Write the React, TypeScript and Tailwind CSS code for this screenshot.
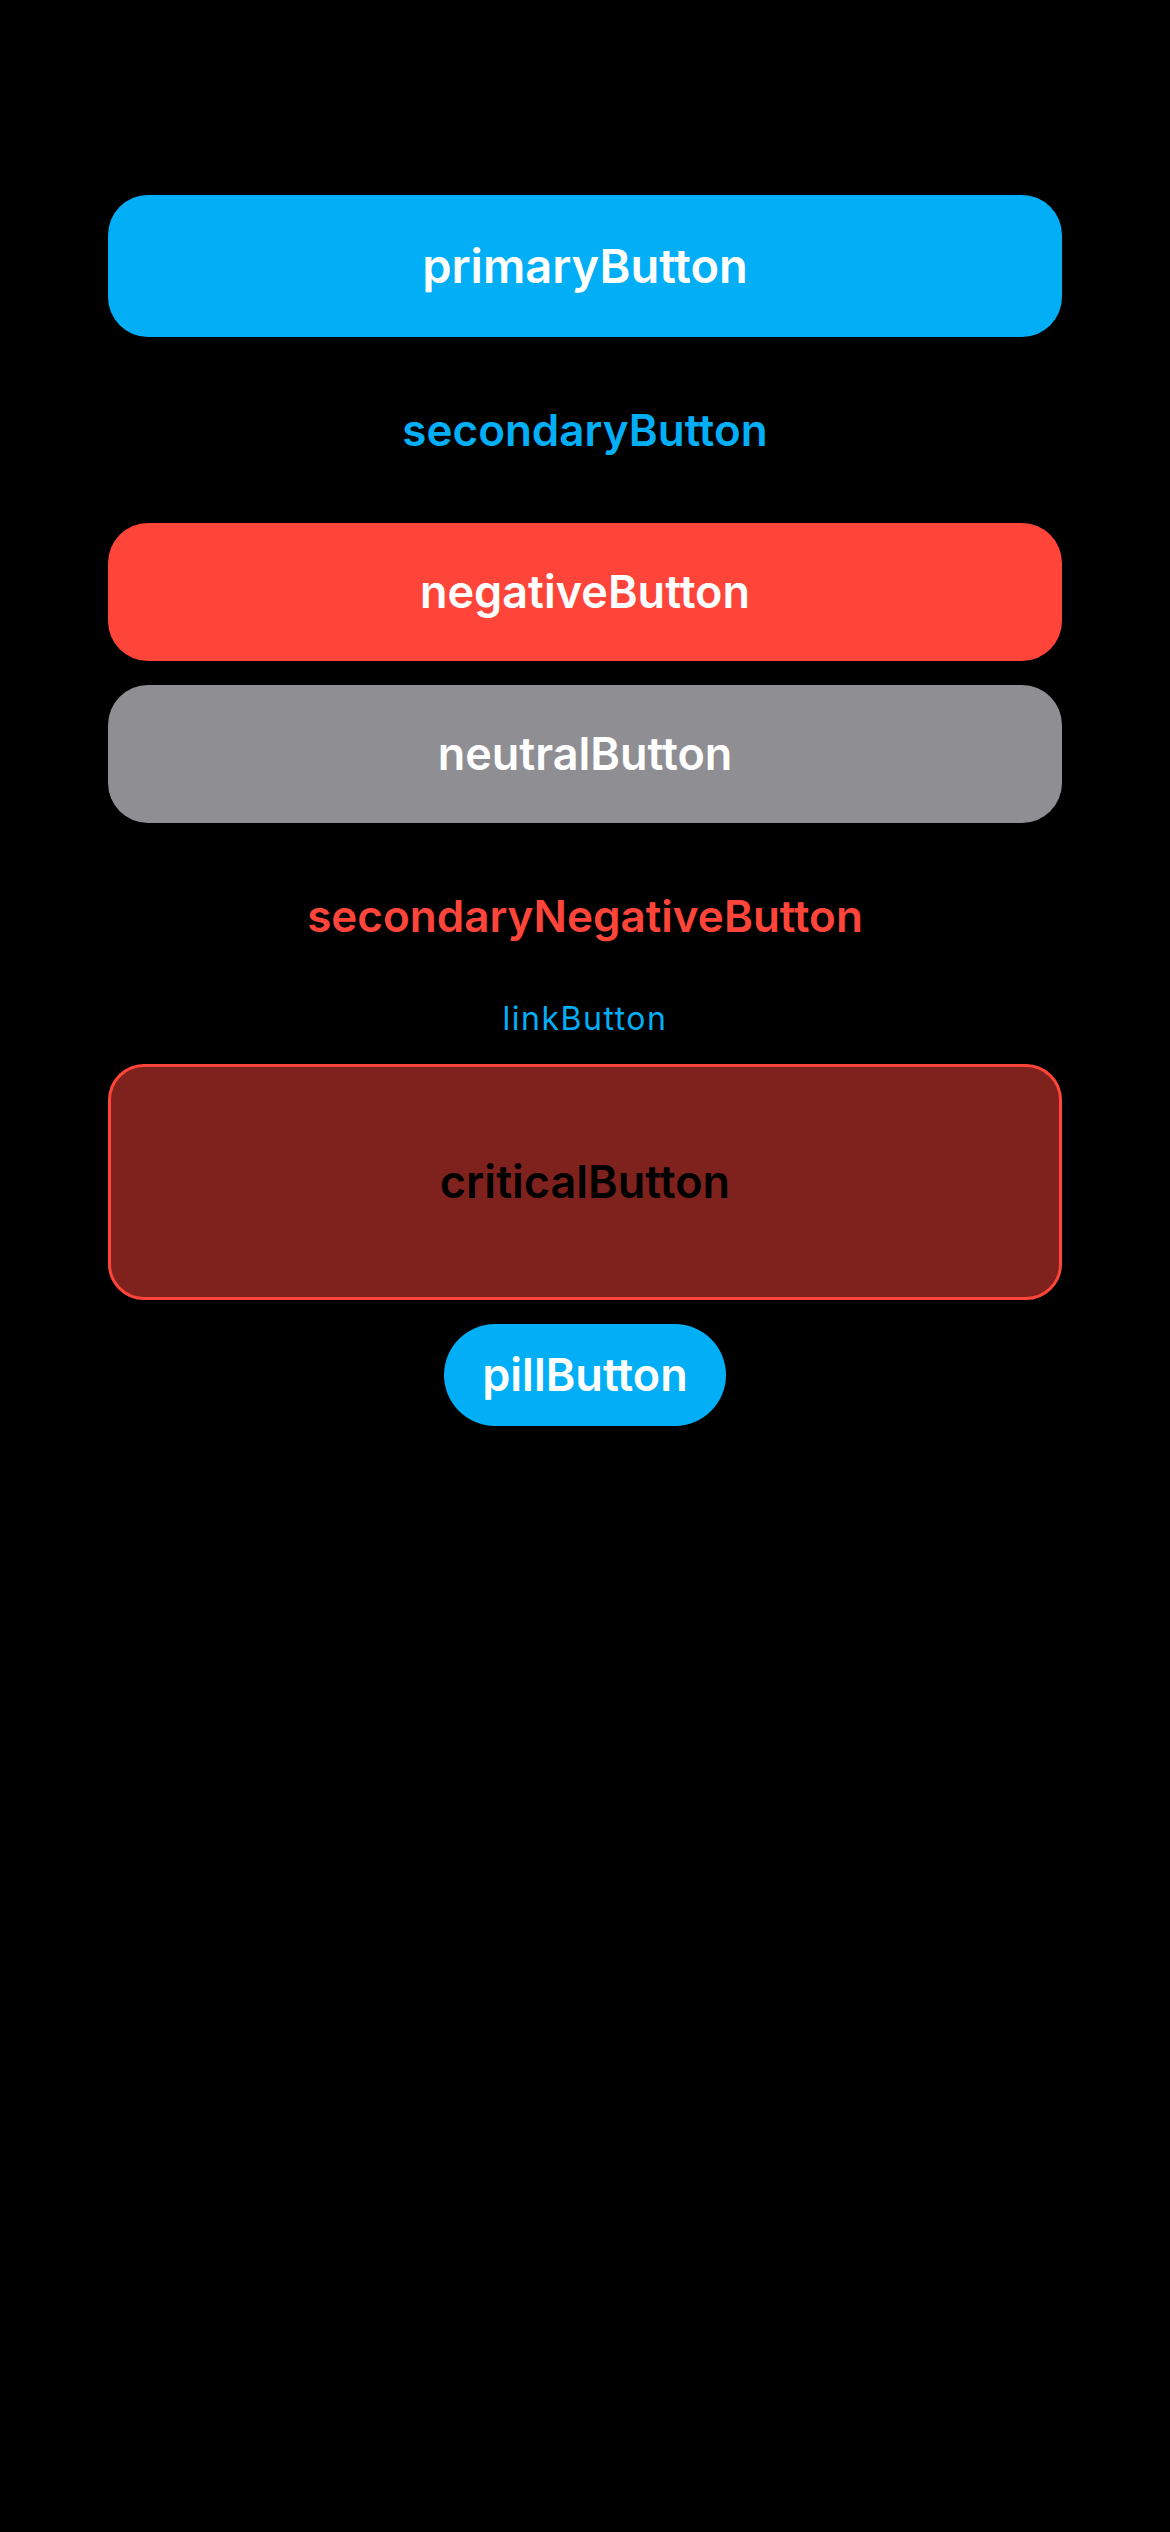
import React from "react";

function App() {
   return (
      <div
         className="flex flex-col w-full min-h-[2532px] bg-black px-[108px] pt-[195px] gap-6"
         style={{ fontFamily: "Inter, 'Noto Sans', sans-serif" }}
      >
         <button className="flex items-center justify-center h-[142px] rounded-[40px] bg-[#02aff7] text-white text-[47px] font-semibold">
            primaryButton
         </button>
         <button className="flex items-center justify-center h-[138px] text-[#02aff7] text-[44px] font-semibold">
            secondaryButton
         </button>
         <button className="flex items-center justify-center h-[138px] rounded-[40px] bg-[#ff453a] text-white text-[45px] font-semibold">
            negativeButton
         </button>
         <button className="flex items-center justify-center h-[138px] rounded-[40px] bg-[#8e8e93] text-white text-[45px] font-semibold">
            neutralButton
         </button>
         <button className="flex items-center justify-center h-[138px] text-[#ff453a] text-[44px] font-semibold">
            secondaryNegativeButton
         </button>
         <button className="flex items-center justify-center h-[48px] -mt-[14px] text-[#02aff7] text-[32px] tracking-[1.5px] font-normal">
            linkButton
         </button>
         <button className="flex items-center justify-center h-[236px] -mt-[3px] rounded-[36px] border-[3px] border-[#ff453a] bg-[#7f221e] text-black text-[45px] font-semibold">
            criticalButton
         </button>
         <button className="flex items-center justify-center self-center h-[102px] px-[38px] rounded-full bg-[#02aff7] text-white text-[45px] font-semibold">
            pillButton
         </button>
      </div>
   );
}

export default App;
